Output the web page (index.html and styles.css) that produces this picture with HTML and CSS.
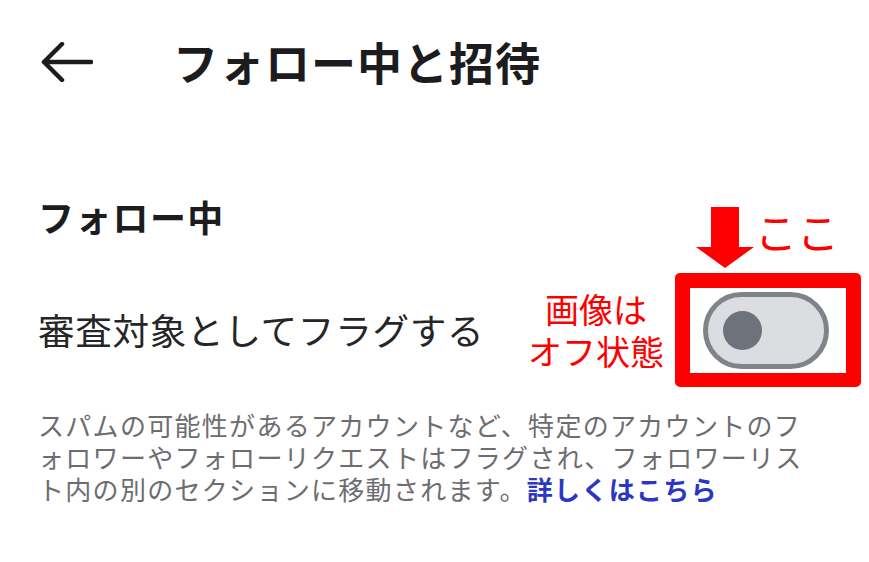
FILE: index.html
```html
<!DOCTYPE html>
<html lang="ja">
<head>
    <meta charset="UTF-8">
    <meta name="viewport" content="width=device-width, initial-scale=1.0">
    <link rel="stylesheet" href="styles.css">
</head>
<body>
    <div class="page">
        <header class="header">
            <svg class="back" viewBox="0 0 52 40" aria-hidden="true">
                <path d="M3 20 H50 M21 2 L3 20 L21 38" fill="none" stroke="#1c1c1e" stroke-width="4.5" stroke-linecap="round" stroke-linejoin="round"/>
            </svg>
            <h1 class="title">フォロー中と招待</h1>
        </header>

        <h2 class="section-title">フォロー中</h2>

        <div class="row">
            <span class="label">審査対象としてフラグする</span>
            <div class="note">
                <span class="line">画像は</span>
                <span class="line">オフ状態</span>
            </div>
            <div class="mark">
                <svg class="mark-arrow" viewBox="0 0 60 62" aria-hidden="true">
                    <path d="M16 0 H44 V40 H59 L30 61 L1 40 H16 Z" fill="#ff0000"/>
                </svg>
                <span class="mark-text">ここ</span>
                <div class="switch">
                    <span class="knob"></span>
                </div>
            </div>
        </div>

        <div class="desc">
            <span class="line">スパムの可能性があるアカウントなど、特定のアカウントのフ</span>
            <span class="line">ォロワーやフォローリクエストはフラグされ、フォロワーリス</span>
            <span class="line">ト内の別のセクションに移動されます。<a class="more" href="#">詳しくはこちら</a></span>
        </div>
    </div>
</body>
</html>
```

FILE: styles.css
```css
body {
    margin: 0;
    background-color: #ffffff;
    font-family: "Noto Sans CJK JP", "Noto Sans", sans-serif;
    color: #1c1c1e;
}
.page {
    padding: 34px 8px 0 38px;
}
.header {
    display: flex;
    align-items: center;
    height: 56px;
    padding-left: 3px;
}
.back {
    width: 52px;
    height: 40px;
    margin-right: 80px;
    flex-shrink: 0;
}
.title {
    margin: 0;
    font-size: 45px;
    font-weight: 700;
    line-height: 56px;
    letter-spacing: 1px;
}
.section-title {
    margin: 104px 0 0;
    font-size: 36px;
    font-weight: 700;
    line-height: 44px;
    letter-spacing: 1.3px;
}
.row {
    display: flex;
    align-items: center;
    margin-top: 35px;
}
.label {
    font-size: 36.6px;
    line-height: 44px;
    letter-spacing: 0.7px;
    color: #262628;
}
.line {
    display: block;
    white-space: nowrap;
}
.note {
    margin-left: auto;
    margin-right: 11px;
    font-size: 34px;
    line-height: 42px;
    text-align: center;
    color: #ff0000;
}
/* red frame round the switch */
.mark {
    position: relative;
    display: flex;
    align-items: center;
    width: 143px;
    height: 85px;
    padding-left: 13px;
    border: 15px solid #ff0000;
    border-bottom-width: 14px;
    border-radius: 5px;
    background: #fff;
}
.mark-arrow {
    position: absolute;
    left: 5px;
    top: -81px;
    width: 60px;
    height: 62px;
}
.mark-text {
    position: absolute;
    left: 65px;
    top: -78px;
    font-size: 42px;
    line-height: 42px;
    color: #ff0000;
    white-space: nowrap;
}
.switch {
    display: flex;
    align-items: center;
    width: 101px;
    height: 67px;
    padding-left: 15px;
    border: 5px solid #7f848a;
    border-radius: 40px;
    background: #dcdde1;
    flex-shrink: 0;
}
.knob {
    width: 39px;
    height: 39px;
    border-radius: 50%;
    background: #6e727a;
}
.desc {
    margin-top: 22px;
    font-size: 26px;
    line-height: 32px;
    letter-spacing: 1.3px;
    color: #6d6d70;
}
.more {
    color: #2b37c2;
    font-weight: 700;
    text-decoration: none;
}
```
